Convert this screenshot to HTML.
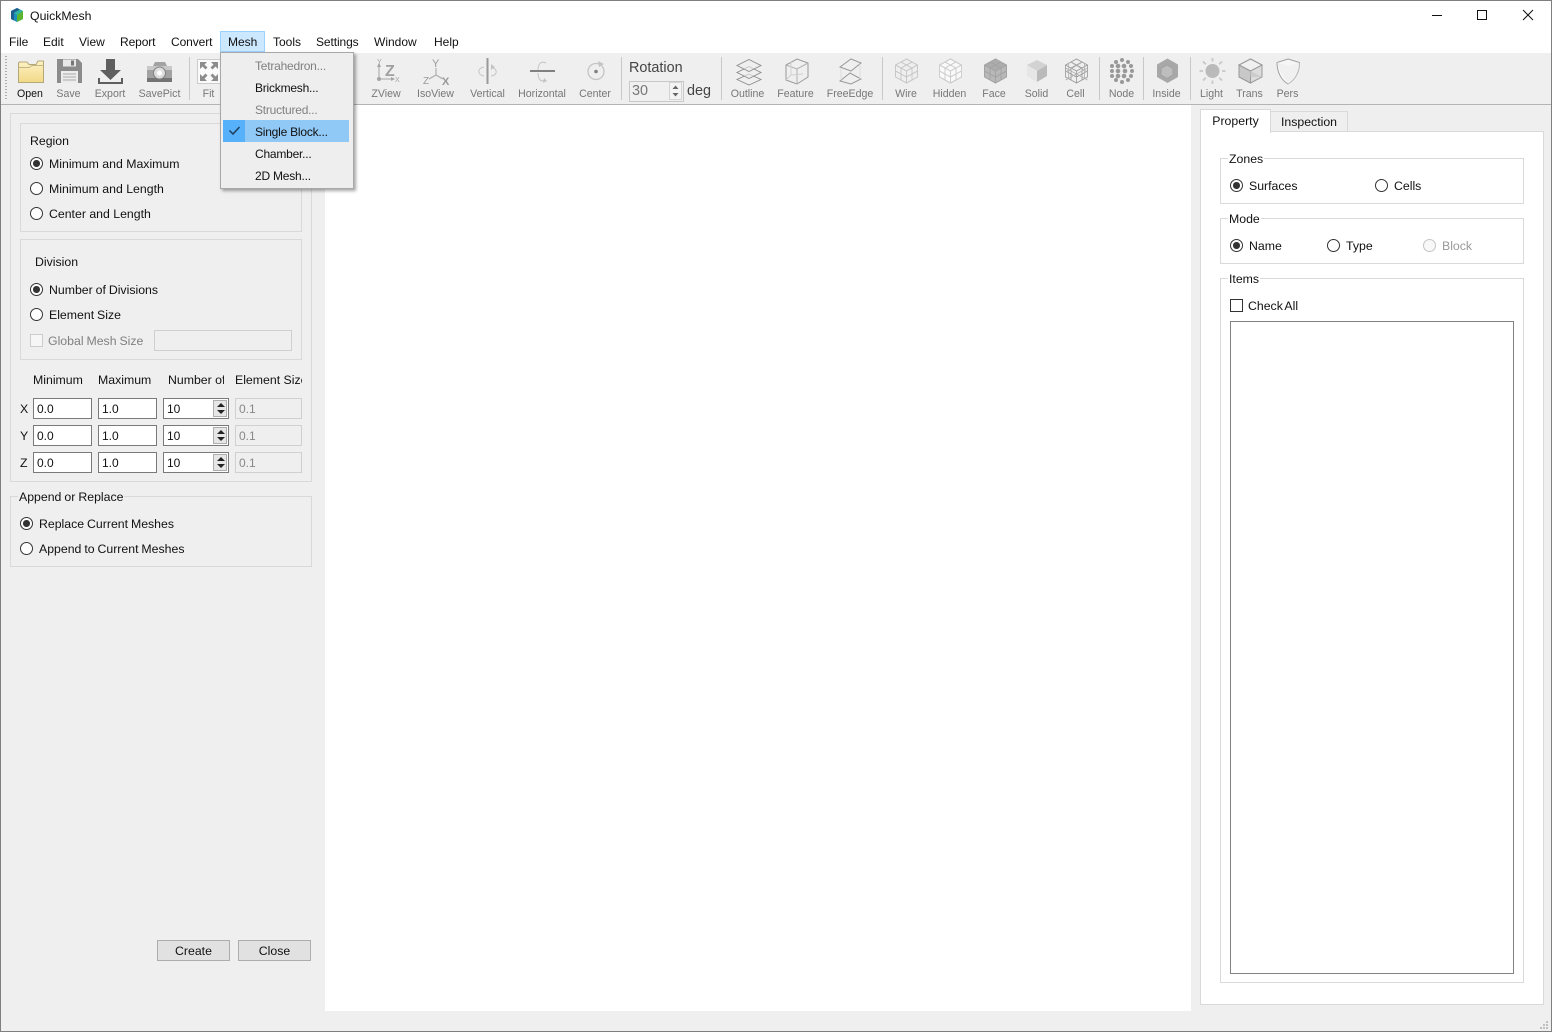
<!DOCTYPE html>
<html><head><meta charset="utf-8"><title>QuickMesh</title>
<style>
html,body{margin:0;padding:0;width:1552px;height:1032px;overflow:hidden;background:#efefef}
body{position:relative;font:12.3px/14px "Liberation Sans",Arial,sans-serif;color:#111}
div{position:absolute;box-sizing:border-box}
.t{white-space:nowrap}
.m{font-size:12px}
.g{border:1px solid #d9d9d9}
.r{width:13px;height:13px;border:1.3px solid #333;border-radius:50%;background:#fff}
.r.c::after{content:"";position:absolute;left:2px;top:2px;width:6.5px;height:6.5px;border-radius:50%;background:#333}
.r.d{border-color:#c4c4c4;background:#f8f8f8}
.l{width:80px;text-align:center;top:88px;font-size:10.6px;color:#777;line-height:13px;white-space:nowrap}
.i{height:21px;background:#fff;border:1px solid #7a7a7a;padding:3px 0 0 3px;font-size:12px;line-height:14px}
.i.d{background:#efefef;border-color:#d0d0d0;color:#888}
.sp{left:213px;width:14px;height:17px;background:#e6e6e6;border:1px solid #adadad}
.sp::before{content:"";position:absolute;left:2.5px;top:2px;border:4px solid transparent;border-top:0;border-bottom:4px solid #222}
.sp::after{content:"";position:absolute;left:2.5px;top:9px;border:4px solid transparent;border-bottom:0;border-top:4px solid #222}
.mi{left:255px;font-size:12px;letter-spacing:-.22px;white-space:nowrap}
.btn{height:21px;width:73px;top:940px;background:#e1e1e1;border:1px solid #adadad;text-align:center;line-height:20px;font-size:12.3px}
.sep{width:1px;top:57px;height:43px;background:#c8c8c8}
</style></head><body>
<!-- title / menu -->
<div style="left:0;top:0;width:1552px;height:53px;background:#fff"></div>
<svg style="position:absolute;left:9px;top:7px" width="16" height="16" viewBox="0 0 16 16"><path d="M8 1L14 4V12L8 15L2 12V4Z" fill="#1b8fc0"/><path d="M8 8L14 4V12L8 15Z" fill="#5db52f"/><path d="M2 4L8 1L11 2.5L5 6V13.500L2 12Z" fill="#1f5f90"/><path d="M8 8L14 4L11 2.500L5 6Z" fill="#2fb5a0"/></svg>
<div class="t" style="left:30px;top:9px">QuickMesh</div>
<div style="left:1432px;top:15px;width:10px;height:1px;background:#111"></div>
<div style="left:1477px;top:10px;width:10px;height:10px;border:1px solid #111"></div>
<svg style="position:absolute;left:1522px;top:9px" width="12" height="12"><path d="M1 1L11 11M11 1L1 11" stroke="#111" fill="none"/></svg>
<div style="left:220px;top:31px;width:45px;height:21px;background:#cce8ff;border:1px solid #99d1ff"></div>
<div class="t m" style="left:9px;top:35px">File</div>
<div class="t m" style="left:43px;top:35px">Edit</div>
<div class="t m" style="left:79px;top:35px">View</div>
<div class="t m" style="left:120px;top:35px;letter-spacing:-.1px">Report</div>
<div class="t m" style="left:171px;top:35px;letter-spacing:-.1px">Convert</div>
<div class="t m" style="left:228px;top:35px">Mesh</div>
<div class="t m" style="left:273px;top:35px">Tools</div>
<div class="t m" style="left:316px;top:35px;letter-spacing:-.1px">Settings</div>
<div class="t m" style="left:374px;top:35px">Window</div>
<div class="t m" style="left:434px;top:35px">Help</div>
<!-- toolbar -->
<div style="left:0;top:54px;width:1552px;height:51px;background:#efefef;border-bottom:1px solid #b4b4b4"></div>
<div style="left:5px;top:56px;width:2px;height:45px;background:repeating-linear-gradient(#aaa 0 1px,transparent 1px 3px)"></div>
<div class="sep" style="left:189px"></div><div class="sep" style="left:621px"></div><div class="sep" style="left:721px"></div><div class="sep" style="left:882px"></div><div class="sep" style="left:1099px"></div><div class="sep" style="left:1143px"></div><div class="sep" style="left:1190px"></div>
<svg style="position:absolute;left:0;top:50px" width="1552" height="45" viewBox="0 50 1552 45" font-family="Liberation Sans,sans-serif">
<defs>
<linearGradient id="fo" x1="0" y1="0" x2="0" y2="1"><stop offset="0" stop-color="#fdf2c4"/><stop offset="1" stop-color="#f2d987"/></linearGradient>
<g id="hex" fill="none"><path d="M0 -12L11 -6V6L0 12L-11 6V-6Z"/><path d="M-11 -6L0 0L11 -6M0 0V12"/></g>
<g id="gr" fill="none"><path d="M-5.500 -9L5.500 -3V9M5.500 -9L-5.500 -3V9M-11 0L0 6L11 0"/></g>
</defs>
<!-- open -->
<path d="M18.500 82.500V63.500Q18.500 62 20 62H27L29 64.500H36L38 61H43.500V82.500Z" fill="url(#fo)" stroke="#b5a878"/><path d="M18.500 67.500H29L32 65.500H43.500" fill="none" stroke="#c4b588"/>
<!-- save -->
<path d="M57 59H78L82 63V83H57Z" fill="#8b8b8b"/><rect x="63" y="59.500" width="13" height="7" fill="#e8e8e8"/><rect x="71" y="60.500" width="3" height="5" fill="#777"/><rect x="61" y="71" width="17" height="12" fill="#ececec"/><path d="M63 74H76M63 77H76M63 80H76" stroke="#aaa"/>
<!-- export -->
<path d="M106 59H115V70H121L110.500 80L100 70H106Z" fill="#5f5f5f"/><path d="M99 78V83H122V78" fill="none" stroke="#5f5f5f" stroke-width="2"/>
<!-- savepict -->
<path d="M147 66H153L155 62H165L167 66H172V82H147Z" fill="#a2a2a2"/><rect x="147" y="66" width="25" height="4" fill="#c8c8c8"/><rect x="147" y="78" width="25" height="4" fill="#747474"/><circle cx="159.500" cy="73" r="6" fill="#ddd" stroke="#808080"/><circle cx="159.500" cy="73" r="2.500" fill="#fff"/>
<!-- fit -->
<rect x="197.500" y="59.500" width="26" height="24" fill="#fafafa" stroke="#ccc"/>
<path d="M200 62L207 62L204.500 64.500L207.500 67.500L205.500 69.500L202.500 66.500L200 69ZM218 62L211 62L213.500 64.500L210.500 67.500L212.500 69.500L215.500 66.500L218 69ZM200 81L207 81L204.500 78.500L207.500 75.500L205.500 73.500L202.500 76.500L200 74ZM218 81L211 81L213.500 78.500L210.500 75.500L212.500 73.500L215.500 76.500L218 74Z" fill="#8c8c8c"/>
<!-- zview -->
<path d="M379 64V79H392" fill="none" stroke="#b4b4b4" stroke-width="1.300"/><circle cx="379" cy="79" r="2" fill="#a4a4a4"/><path d="M377 67L379 63L381 67ZM391 77L395 79L391 81Z" fill="#a4a4a4"/>
<text x="377" y="64" font-size="7" fill="#a4a4a4">Y</text><text x="385" y="76" font-size="16" font-weight="700" fill="#a0a0a0">Z</text><text x="395" y="82" font-size="7" fill="#a4a4a4">X</text>
<!-- iso -->
<path d="M436 68V75L429 79M436 75L443 79" fill="none" stroke="#b4b4b4" stroke-width="1.300"/>
<text x="432" y="67" font-size="11" fill="#999">Y</text><text x="423" y="84" font-size="10" fill="#999">Z</text><text x="442" y="85" font-size="11" font-weight="700" fill="#999">X</text>
<!-- vertical -->
<rect x="486.500" y="58" width="2" height="26" fill="#999"/><path d="M484 67C477 68 477 75 484 76M491 67C498 69 498 75 491 76" fill="none" stroke="#c4c4c4"/><path d="M491 64L495 67L491 70Z" fill="#c4c4c4"/>
<!-- horizontal -->
<rect x="530" y="70" width="25" height="2" fill="#808080"/><path d="M546 63C540 60 538 66 538 70M538 73C538 78 540 83 546 80" fill="none" stroke="#c4c4c4"/><path d="M544 78L547 81L543 83Z" fill="#c4c4c4"/>
<!-- center -->
<circle cx="596" cy="71.500" r="8" fill="none" stroke="#c4c4c4" stroke-width="1.300"/><circle cx="596" cy="71.500" r="1.800" fill="#808080"/><path d="M598 61L604 64L599 67Z" fill="#c4c4c4"/>
<!-- outline -->
<g fill="#efefef" fill-opacity=".6" stroke="#8c8c8c" stroke-width=".9"><path d="M749 74L761 79.500L749 85L737 79.500Z"/><path d="M749 66.500L761 72.500L749 78.500L737 72.500Z"/><path d="M749 59.500L761 65.500L749 71.500L737 65.500Z"/></g>
<!-- feature -->
<g fill="none" stroke="#999"><path d="M786 65L797 59L808 63V77L797 84L786 80Z"/><path d="M786 65L797 69L808 63M797 69V84" stroke="#b0b0b0"/><path d="M791 62V75L786 80M791 75L803 74" stroke="#d0d0d0"/></g>
<!-- freeedge -->
<g fill="none" stroke="#999"><path d="M840 67L851 59L861 63L851 71Z"/><path d="M840 81L850 73L861 79L851 84Z"/><path d="M841 68V80M860 64V79" stroke="#ddd"/></g>
<!-- wire -->
<g transform="translate(906.500,71)" stroke="#c8c8c8"><use href="#hex"/><use href="#gr"/></g>
<!-- hidden -->
<g transform="translate(950.500,71)" stroke="#cdcdcd"><path d="M0 -12L11 -6V6L0 12L-11 6V-6Z" fill="#fafafa"/><use href="#hex"/><use href="#gr"/></g>
<!-- face -->
<g transform="translate(995.500,71)"><path d="M0 -12L11 -6V6L0 12L-11 6V-6Z" fill="#b8b8b8"/><path d="M0 -12L11 -6L0 0L-11 -6Z" fill="#acacac"/><use href="#hex" stroke="#a4a4a4"/><use href="#gr" stroke="#a4a4a4"/></g>
<!-- solid -->
<g transform="translate(1037,71)"><path d="M0 -11L10 -6L0 0L-10 -6Z" fill="#d2d2d2"/><path d="M-10 -6L0 0V11L-10 5Z" fill="#e6e6e6"/><path d="M10 -6L0 0V11L10 5Z" fill="#bababa"/></g>
<!-- cell -->
<g transform="translate(1076.500,71)" stroke="#969696" stroke-width=".8"><use href="#hex"/><use href="#gr"/><path d="M-11 -3L11 9M11 -3L-11 9M-8 -8V8M8 -8V8M-6 -9L11 1M6 -9L-11 1" fill="none" stroke="#b0b0b0"/></g>
<!-- node -->
<g fill="#999"><circle cx="1122" cy="60" r="2"/><circle cx="1116" cy="62" r="2"/><circle cx="1128" cy="62" r="2"/><circle cx="1112" cy="66" r="2"/><circle cx="1118" cy="66" r="2.300"/><circle cx="1124" cy="66" r="2.300"/><circle cx="1131" cy="66" r="2"/><circle cx="1112" cy="71" r="2"/><circle cx="1118" cy="71" r="2.300"/><circle cx="1125" cy="71" r="2.300"/><circle cx="1132" cy="71" r="2"/><circle cx="1112" cy="76" r="2"/><circle cx="1118" cy="76" r="2.300"/><circle cx="1124" cy="76" r="2.300"/><circle cx="1131" cy="76" r="2"/><circle cx="1116" cy="80" r="2"/><circle cx="1122" cy="82" r="2"/><circle cx="1128" cy="80" r="2"/></g>
<!-- inside -->
<path d="M1167.500 58.500L1178 64.500V77L1167.500 83L1157 77V64.500Z" fill="#a8a8a8"/><path d="M1167 65L1173 68.500V75L1167 78.500L1161 75V68.500Z" fill="#bdbdbd" stroke="#a0a0a0"/>
<!-- light -->
<circle cx="1212.500" cy="71" r="7" fill="#bababa"/><g stroke="#c8c8c8" stroke-width="1.800"><path d="M1212.500 58V61.500M1212.500 80.500V84M1199.500 71H1203M1222 71H1225.500M1203 61.500L1205.800 64.300M1219.200 77.700L1222 80.500M1222 61.500L1219.200 64.300M1205.800 77.700L1203 80.500"/></g>
<!-- trans -->
<path d="M1250.500 59L1262 65V77L1250.500 83L1239 77V65Z" fill="#dcdcdc" stroke="#999"/><path d="M1239 65L1250.500 71L1262 65L1250.500 59Z" fill="#f0f0f0" stroke="#999"/><path d="M1250.500 71V83L1239 77V65Z" fill="#c8c8c8" stroke="#999"/><path d="M1250.500 71L1262 77H1250.500Z" fill="#cccccc"/>
<!-- pers -->
<path d="M1288 59L1299.500 62.500C1299.500 72 1295 80 1288 84C1281 80 1277 72 1277 62.500Z" fill="#f6f6f6" stroke="#a0a0a0"/><path d="M1277 62.500L1288 66L1299.500 62.500C1299.500 72 1295 80 1288 84C1286 78 1279 72 1277 62.500Z" fill="#ededed" opacity=".6"/>
</svg>
<div class="l" style="left:-10px;color:#111">Open</div><div class="l" style="left:28.500px">Save</div><div class="l" style="left:70px">Export</div><div class="l" style="left:119.500px">SavePict</div><div class="l" style="left:168.500px">Fit</div>
<div class="l" style="left:346px">ZView</div><div class="l" style="left:395.500px">IsoView</div><div class="l" style="left:447.500px">Vertical</div><div class="l" style="left:502px">Horizontal</div><div class="l" style="left:555px">Center</div>
<div class="l" style="left:707.500px">Outline</div><div class="l" style="left:755.500px">Feature</div><div class="l" style="left:810px">FreeEdge</div><div class="l" style="left:866px">Wire</div><div class="l" style="left:909.500px">Hidden</div><div class="l" style="left:954px">Face</div><div class="l" style="left:996.500px">Solid</div><div class="l" style="left:1035.500px">Cell</div><div class="l" style="left:1081.500px">Node</div><div class="l" style="left:1126.500px">Inside</div><div class="l" style="left:1171.500px">Light</div><div class="l" style="left:1209.500px">Trans</div><div class="l" style="left:1247.500px">Pers</div>
<div class="t" style="left:629px;top:60px;font-size:14.400px;line-height:16px;color:#444">Rotation</div>
<div style="left:629px;top:81px;width:55px;height:21px;border:1px solid #c8c8c8;background:#f0f0f0;color:#777;font-size:14.400px;line-height:18px;padding-left:2px">30</div>
<div style="left:669px;top:82px;width:13px;height:18px;background:#f4f4f4;border:1px solid #d4d4d4"></div>
<svg style="position:absolute;left:669px;top:82px" width="13" height="18"><path d="M3.500 7L6.500 3.500L9.500 7ZM3.500 11L6.500 14.500L9.500 11Z" fill="#666"/></svg>
<div class="t" style="left:687px;top:83px;font-size:14.400px;line-height:16px;color:#444">deg</div>
<!-- central -->
<div style="left:325px;top:105px;width:866px;height:906px;background:#fff"></div>
<!-- left panel -->
<div class="g" style="left:10px;top:113px;width:302px;height:369px"></div>
<div class="g" style="left:20px;top:123px;width:282px;height:109px"></div>
<div class="t" style="left:30px;top:134px">Region</div>
<div class="r c" style="left:30px;top:157px"></div><div class="t" style="left:49px;top:157px">Minimum and Maximum</div>
<div class="r" style="left:30px;top:182px"></div><div class="t" style="left:49px;top:182px">Minimum and Length</div>
<div class="r" style="left:30px;top:207px"></div><div class="t" style="left:49px;top:207px">Center and Length</div>
<div class="g" style="left:20px;top:239px;width:282px;height:121px"></div>
<div class="t" style="left:35px;top:255px">Division</div>
<div class="r c" style="left:30px;top:283px"></div><div class="t" style="left:49px;top:283px;word-spacing:-.5px">Number of Divisions</div>
<div class="r" style="left:30px;top:308px"></div><div class="t" style="left:49px;top:308px;word-spacing:-.5px">Element Size</div>
<div style="left:30px;top:334px;width:13px;height:13px;border:1px solid #ccc;background:#f6f6f6"></div>
<div class="t" style="left:48px;top:334px;color:#808080;word-spacing:-.5px">Global Mesh Size</div>
<div style="left:154px;top:330px;width:138px;height:21px;border:1px solid #cfcfcf;background:#efefef"></div>
<div class="t" style="left:33px;top:373px">Minimum</div><div class="t" style="left:98px;top:373px">Maximum</div>
<div class="t" style="left:168px;top:373px;width:55.500px;overflow:hidden">Number of Divisions</div>
<div class="t" style="left:235px;top:373px;width:67px;overflow:hidden">Element Size</div>
<div class="t" style="left:20px;top:402px">X</div><div class="t" style="left:20px;top:429px">Y</div><div class="t" style="left:20px;top:456px">Z</div>
<div class="i" style="left:33px;top:398px;width:59px">0.0</div><div class="i" style="left:98px;top:398px;width:59px">1.0</div><div class="i" style="left:163px;top:398px;width:66px">10</div><div class="i d" style="left:235px;top:398px;width:67px">0.1</div><div class="sp" style="top:400px"></div>
<div class="i" style="left:33px;top:425px;width:59px">0.0</div><div class="i" style="left:98px;top:425px;width:59px">1.0</div><div class="i" style="left:163px;top:425px;width:66px">10</div><div class="i d" style="left:235px;top:425px;width:67px">0.1</div><div class="sp" style="top:427px"></div>
<div class="i" style="left:33px;top:452px;width:59px">0.0</div><div class="i" style="left:98px;top:452px;width:59px">1.0</div><div class="i" style="left:163px;top:452px;width:66px">10</div><div class="i d" style="left:235px;top:452px;width:67px">0.1</div><div class="sp" style="top:454px"></div>
<div class="g" style="left:10px;top:496px;width:302px;height:71px"></div>
<div class="t" style="left:18px;top:490px;background:#efefef;padding:0 1px;word-spacing:-.4px">Append or Replace</div>
<div class="r c" style="left:20px;top:517px"></div><div class="t" style="left:39px;top:517px;word-spacing:-.5px">Replace Current Meshes</div>
<div class="r" style="left:20px;top:542px"></div><div class="t" style="left:39px;top:542px;word-spacing:-.5px">Append to Current Meshes</div>
<div class="btn" style="left:157px">Create</div><div class="btn" style="left:238px">Close</div>
<!-- right panel -->
<div style="left:1200px;top:131px;width:344px;height:874px;background:#fff;border:1px solid #d9d9d9"></div>
<div style="left:1270px;top:111px;width:78px;height:21px;background:#efefef;border:1px solid #d9d9d9;text-align:center;line-height:20px">Inspection</div>
<div style="left:1200px;top:109px;width:71px;height:24px;background:#fff;border:1px solid #d9d9d9;border-bottom:0;text-align:center;line-height:22px;font-size:12.300px">Property</div>
<div class="g" style="left:1220px;top:158px;width:304px;height:46px"></div>
<div class="t" style="left:1228px;top:152px;background:#fff;padding:0 1px">Zones</div>
<div class="r c" style="left:1230px;top:179px"></div><div class="t" style="left:1249px;top:179px">Surfaces</div>
<div class="r" style="left:1375px;top:179px"></div><div class="t" style="left:1394px;top:179px">Cells</div>
<div class="g" style="left:1220px;top:218px;width:304px;height:46px"></div>
<div class="t" style="left:1228px;top:212px;background:#fff;padding:0 1px">Mode</div>
<div class="r c" style="left:1230px;top:239px"></div><div class="t" style="left:1249px;top:239px">Name</div>
<div class="r" style="left:1327px;top:239px"></div><div class="t" style="left:1346px;top:239px">Type</div>
<div class="r d" style="left:1423px;top:239px"></div><div class="t" style="left:1442px;top:239px;color:#999">Block</div>
<div class="g" style="left:1220px;top:278px;width:304px;height:705px"></div>
<div class="t" style="left:1228px;top:272px;background:#fff;padding:0 1px">Items</div>
<div style="left:1230px;top:299px;width:13px;height:13px;border:1px solid #333;background:#fff"></div>
<div class="t" style="left:1248px;top:299px;word-spacing:-1.200px">Check All</div>
<div style="left:1230px;top:321px;width:284px;height:653px;border:1px solid #828282;background:#fff"></div>
<!-- grip -->
<svg style="position:absolute;left:1540px;top:1020px" width="10" height="10"><path d="M6 1h2v2h-2zM3 4h2v2h-2zM6 4h2v2h-2zM0 7h2v2h-2zM3 7h2v2h-2zM6 7h2v2h-2z" fill="#c0c0c0"/></svg>
<!-- popup -->
<div style="left:220px;top:52px;width:134px;height:137px;background:#eee;border:1px solid #a8a8a8;box-shadow:2px 2px 3px rgba(0,0,0,.35)"></div>
<div style="left:223px;top:120px;width:126px;height:22px;background:#90c8f6"></div>
<div style="left:223px;top:120px;width:22px;height:22px;background:#56b0fa"></div>
<svg style="position:absolute;left:228px;top:125px" width="13" height="11"><path d="M1.500 5.500L5 9L11.500 2" fill="none" stroke="#1d3f60" stroke-width="1.500"/></svg>
<div class="mi" style="top:59px;color:#808080">Tetrahedron...</div>
<div class="mi" style="top:81px">Brickmesh...</div>
<div class="mi" style="top:103px;color:#808080">Structured...</div>
<div class="mi" style="top:125px">Single Block...</div>
<div class="mi" style="top:147px">Chamber...</div>
<div class="mi" style="top:169px">2D Mesh...</div>
<!-- window border -->
<div style="left:0;top:0;width:1552px;height:1032px;border:1px solid #7f7f7f;pointer-events:none"></div>
</body></html>
